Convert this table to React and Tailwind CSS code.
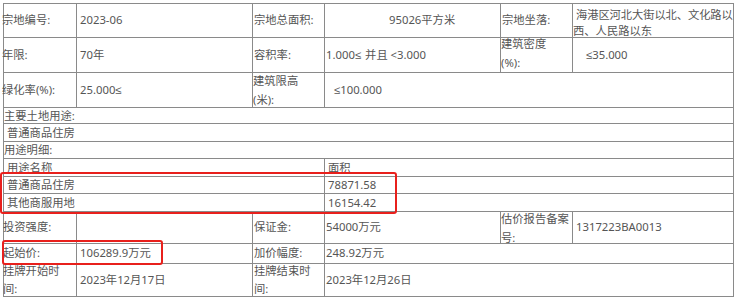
import React from 'react';

const cell = 'flex items-center whitespace-nowrap border-r border-b border-[#8a8a8a]';

const Cell = ({ className = '', children }) => (
  <div className={`${cell} ${className}`}>{children}</div>
);

const Two = ({ a, b, lh = 'leading-[19px]' }) => (
  <div className={lh}>
    {a}
    <br />
    {b}
  </div>
);

// latin "≤" (the CJK fallback draws it full width)
const Le = () => <span className="font-[family-name:'Liberation_Sans',sans-serif]">≤</span>;

export default function App() {
  return (
    <div className="relative w-[740px] h-[300px] bg-white pl-[3px] pt-[3px] text-[11.3px] text-[#555] font-[family-name:'Noto_Sans','Noto_Sans_CJK_SC',sans-serif]">
      <div className="grid w-fit border-l border-t border-[#8a8a8a] grid-cols-[73px_176px_72px_176px_72px_161px] grid-rows-[34px_35px_35px_16px_18px_17px_18px_17px_18px_32px_20px_33px]">
        {/* row 1 */}
        <Cell><span className="-ml-[2px]">宗地编号:</span></Cell>
        <Cell className="pl-[3px]">2023-06</Cell>
        <Cell className="pl-[1px]">宗地总面积:</Cell>
        <Cell className="pl-[64px]">95026平方米</Cell>
        <Cell className="pl-[1px]">宗地坐落:</Cell>
        <Cell className="pt-[5px]">
          <Two lh="leading-[16px]" a={<span className="pl-[3px] tracking-[-0.1px]">海港区河北大街以北、文化路以</span>} b="西、人民路以东" />
        </Cell>

        {/* row 2 */}
        <Cell><span className="-ml-[2px]">年限:</span></Cell>
        <Cell className="pl-[3px]">70年</Cell>
        <Cell className="pl-[1px]">容积率:</Cell>
        <Cell className="pl-[1px]">1.000<Le /><span className="ml-[4px]">并且 &lt;3.000</span></Cell>
        <Cell className="pb-[5px]"><Two a="建筑密度" b="(%):" /></Cell>
        <Cell className="pl-[13px]"><Le />35.000</Cell>

        {/* row 3 */}
        <Cell><span className="-ml-[2px]">绿化率(%):</span></Cell>
        <Cell className="pl-[3px]">25.000<Le /></Cell>
        <Cell><Two a="建筑限高" b="(米):" /></Cell>
        <Cell className="col-span-3 pl-[9px]"><Le />100.000</Cell>

        {/* land use */}
        <Cell className="col-span-6 leading-[16px]">主要土地用途:</Cell>
        <Cell className="col-span-6 pl-[3px] leading-[16px]">普通商品住房</Cell>
        <Cell className="col-span-6 leading-[16px]">用途明细:</Cell>
        <Cell className="col-span-3 pl-[3px] leading-[16px]">用途名称</Cell>
        <Cell className="col-span-3 pl-[3px] leading-[16px]">面积</Cell>
        <Cell className="col-span-3 pl-[3px] leading-[16px]">普通商品住房</Cell>
        <Cell className="col-span-3 pl-[3px] leading-[16px]">78871.58</Cell>
        <Cell className="col-span-3 pl-[3px] leading-[16px]">其他商服用地</Cell>
        <Cell className="col-span-3 pl-[3px] leading-[16px]">16154.42</Cell>

        {/* row 10 */}
        <Cell><span className="-ml-[1px]">投资强度:</span></Cell>
        <Cell />
        <Cell className="pl-[1px]">保证金:</Cell>
        <Cell className="pl-[1px]">54000万元</Cell>
        <Cell><Two a="估价报告备案" b="号:" /></Cell>
        <Cell className="pl-[3px]">1317223BA0013</Cell>

        {/* row 11 */}
        <Cell><span className="-ml-[1px]">起始价:</span></Cell>
        <Cell className="pl-[3px]">106289.9万元</Cell>
        <Cell className="pl-[1px]">加价幅度:</Cell>
        <Cell className="col-span-3 pl-[1px]">248.92万元</Cell>

        {/* row 12 */}
        <Cell><span className="-ml-[1px]"><Two lh="leading-[18px]" a="挂牌开始时" b="间:" /></span></Cell>
        <Cell className="pl-[3px]">2023年12月17日</Cell>
        <Cell className="pl-[1px]"><Two lh="leading-[18px]" a="挂牌结束时" b="间:" /></Cell>
        <Cell className="col-span-3 pl-[1px]">2023年12月26日</Cell>
      </div>

      {/* red highlight marks */}
      <div className="absolute left-0 top-[172px] w-[397px] h-[42px] border-2 border-[#e8201c] rounded-[3px]" />
      <div className="absolute left-[2px] top-[240px] w-[161px] h-[25px] border-2 border-[#e8201c] rounded-[3px]" />
    </div>
  );
}
